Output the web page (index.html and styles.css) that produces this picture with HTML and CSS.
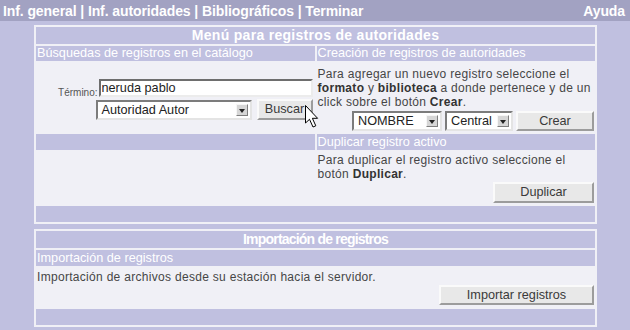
FILE: index.html
```html
<!DOCTYPE html>
<html lang="es">
<head>
<meta charset="utf-8">
<title>Menú para registros de autoridades</title>
<link rel="stylesheet" href="styles.css">
</head>
<body>
<div class="topbar">
  <div class="nav">Inf. general | Inf. autoridades | Bibliográficos | Terminar</div>
  <div class="help">Ayuda</div>
</div>

<div class="panel panel-main">
  <div class="title span2">Menú para registros de autoridades</div>
  <div class="sub">Búsquedas de registros en el catálogo</div>
  <div class="sub">Creación de registros de autoridades</div>
  <div class="cell search">
    <div class="search-row">
      <span class="term">Término:</span>
      <input class="input" type="text" value="neruda pablo">
    </div>
    <div class="search-row">
      <span class="select sel-autor"><span class="val">Autoridad Autor</span><span class="arrow"></span></span>
      <button class="btn btn-buscar">Buscar</button>
    </div>
  </div>
  <div class="cell create">
    <p class="text">Para agregar un nuevo registro seleccione el<br><b>formato</b> y <b>biblioteca</b> a donde pertenece y de un<br>click sobre el botón <b>Crear</b>.</p>
    <div class="actions">
      <span class="select sel-nombre"><span class="val">NOMBRE</span><span class="arrow"></span></span>
      <span class="select sel-central"><span class="val">Central</span><span class="arrow"></span></span>
      <button class="btn btn-crear">Crear</button>
    </div>
  </div>
  <div class="sub"></div>
  <div class="sub sub-dup">Duplicar registro activo</div>
  <div class="cell"></div>
  <div class="cell dup">
    <p class="text">Para duplicar el registro activo seleccione el<br>botón <b>Duplicar</b>.</p>
    <div class="actions">
      <button class="btn btn-dup">Duplicar</button>
    </div>
  </div>
  <div class="bar span2"></div>
</div>

<div class="panel panel-import">
  <div class="title title-import">Importación de registros</div>
  <div class="sub">Importación de registros</div>
  <div class="cell import">
    <p class="text">Importación de archivos desde su estación hacia el servidor.</p>
    <div class="actions">
      <button class="btn btn-import">Importar registros</button>
    </div>
  </div>
  <div class="bar"></div>
</div>

<svg class="cursor" width="14" height="23" viewBox="0 0 14 23" aria-hidden="true">
  <path d="M0.5,0.5 V18 L4.5,14.3 L8,22 L10.8,20.8 L7.4,13.3 H12.6 Z" fill="#ffffff" stroke="#000000" stroke-width="1" stroke-linejoin="miter"/>
</svg>
</body>
</html>
```

FILE: styles.css
```css
* {
  box-sizing: border-box;
}

body {
  margin: 0;
  width: 630px;
  height: 330px;
  overflow: hidden;
  position: relative;
  background: #c0c0e0;
  font-family: "Liberation Sans", Arial, sans-serif;
  font-size: 12.7px;
  color: #464646;
}

.topbar {
  height: 21px;
  background: #a2a2c2;
  color: #ffffff;
  font-weight: bold;
  font-size: 14px;
  line-height: 20px;
  padding: 1px 5px 0 3px;
  display: flex;
  justify-content: space-between;
  letter-spacing: -0.1px;
}

.panel {
  width: 563px;
  margin: 4px 0 0 34px;
  padding: 2px;
  background: #f0f0f6;
  display: grid;
  gap: 2px;
}

.panel-main {
  grid-template-columns: 1fr 1fr;
  grid-template-rows: 17px 15px 69px 16px 52px 16px;
}

.panel-import {
  margin-top: 5px;
  grid-template-columns: 1fr;
  grid-template-rows: 17px 16px 39px 16px;
}

.span2 {
  grid-column: 1 / 3;
}

.title {
  background: #c0c0e0;
  color: #ffffff;
  font-weight: bold;
  font-size: 14px;
  line-height: 17px;
  text-align: center;
  letter-spacing: 0.3px;
}

.title-import {
  letter-spacing: -0.8px;
}

.sub {
  background: #c0c0e0;
  color: #ffffff;
  line-height: 15px;
  padding-left: 1px;
  white-space: nowrap;
}

.sub-dup,
.panel-import .sub {
  line-height: 16px;
}

.bar {
  background: #c0c0e0;
}

.cell {
  background: #f0f0f6;
}

.text {
  margin: 0;
  font-size: 12px;
  letter-spacing: 0.3px;
  line-height: 14px;
  padding-left: 1px;
  white-space: nowrap;
}

.text b {
  color: #333333;
}

.create {
  padding-top: 4px;
}

.dup {
  padding-top: 1px;
}

.import {
  padding-top: 2px;
}

.actions {
  display: flex;
  justify-content: flex-end;
  gap: 3px;
  padding-right: 1px;
}

.create .actions {
  margin-top: 2px;
}

.dup .actions,
.import .actions {
  margin-top: 1px;
}

/* search form */
.search {
  padding: 16px 2px 0 0;
  display: flex;
  flex-direction: column;
  align-items: flex-end;
  gap: 2px;
}

.search-row {
  display: flex;
  align-items: flex-end;
}

.term {
  font-size: 10px;
  line-height: 10px;
  color: #555555;
  margin-right: 1px;
  margin-bottom: -1px;
}

.input {
  width: 214px;
  height: 18px;
  margin: 0;
  padding: 0 1px;
  border: 2px solid;
  border-color: #6e6e6e #ececec #ececec #6e6e6e;
  background: #ffffff;
  font-family: "Liberation Sans", Arial, sans-serif;
  font-size: 12.7px;
  color: #1e1e1e;
  outline: none;
}

/* fake select */
.select {
  display: flex;
  align-items: center;
  height: 20px;
  padding: 0 2px 0 4px;
  border: 2px solid;
  border-color: #7c7c7c #e4e4e4 #e4e4e4 #7c7c7c;
  background: #ffffff;
  color: #222222;
  font-size: 12.7px;
  white-space: nowrap;
}

.select .val {
  flex: 1;
}

.select .arrow {
  width: 12px;
  height: 12px;
  background: #d6d6d6;
  border: 1px solid;
  border-color: #f6f6f6 #7e7e7e #7e7e7e #f6f6f6;
  display: flex;
  align-items: center;
  justify-content: center;
}

.select .arrow::after {
  content: "";
  width: 0;
  height: 0;
  border-left: 3px solid transparent;
  border-right: 3px solid transparent;
  border-top: 4px solid #222222;
  margin-top: 1px;
}

.sel-autor {
  width: 156px;
  margin-right: 5px;
}

.sel-nombre {
  width: 90px;
}

.sel-central {
  width: 68px;
}

/* buttons */
.btn {
  margin: 0;
  padding: 0;
  height: 21px;
  border: 2px solid;
  border-color: #fafafa #9c9c9c #9c9c9c #fafafa;
  background: #e8e8e8;
  color: #3a3a3a;
  font-family: "Liberation Sans", Arial, sans-serif;
  font-size: 12.7px;
  line-height: 15px;
}

.btn-buscar {
  width: 56px;
}

.btn-crear {
  width: 78px;
  height: 20px;
}

.btn-dup {
  width: 101px;
}

.btn-import {
  width: 155px;
  height: 20px;
}

.cursor {
  position: absolute;
  left: 305px;
  top: 105px;
}
```
